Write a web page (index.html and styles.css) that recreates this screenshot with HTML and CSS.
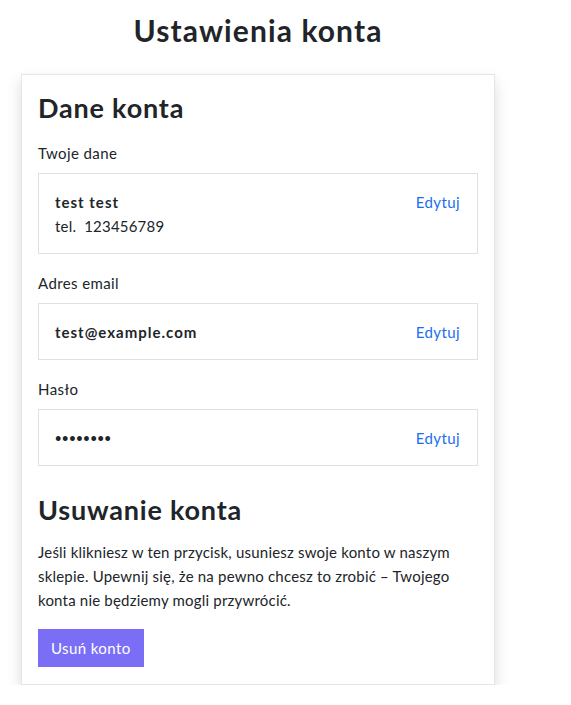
FILE: index.html
```html
<!DOCTYPE html>
<html lang="pl">
<head>
<meta charset="utf-8">
<title>Ustawienia konta</title>
<link rel="stylesheet" href="styles.css">
</head>
<body>
<main class="page">
  <h1 class="page-title">Ustawienia konta</h1>
  <section class="card">
    <h2 class="section-title">Dane konta</h2>

    <div class="field-label first">Twoje dane</div>
    <div class="field-box">
      <div class="field-value">
        <div class="strong">test test</div>
        <div class="sub">tel.&nbsp; 123456789</div>
      </div>
      <a class="edit-link" href="#">Edytuj</a>
    </div>

    <div class="field-label">Adres email</div>
    <div class="field-box">
      <div class="field-value"><div class="strong">test@example.com</div></div>
      <a class="edit-link" href="#">Edytuj</a>
    </div>

    <div class="field-label">Hasło</div>
    <div class="field-box">
      <div class="field-value"><div class="strong dots">••••••••</div></div>
      <a class="edit-link" href="#">Edytuj</a>
    </div>

    <h2 class="section-title delete-title">Usuwanie konta</h2>
    <p class="note">Jeśli klikniesz w ten przycisk, usuniesz swoje konto w naszym sklepie. Upewnij się, że na pewno chcesz to zrobić – Twojego konta nie będziemy mogli przywrócić.</p>
    <button class="danger-btn" type="button">Usuń konto</button>
  </section>
</main>
</body>
</html>
```
FILE: styles.css
```css
* { box-sizing: border-box; }
html, body { margin: 0; padding: 0; background: #fff; }
body {
  font-family: Lato, "Open Sans", "Noto Sans", sans-serif;
  color: #212529;
  font-size: 15px;
}
.page {
  width: 474px;
  margin-left: 21px;
  padding-top: 13px;
}
.page-title {
  margin: 0 0 27px;
  text-align: center;
  font-size: 30px;
  line-height: 34px;
  font-weight: 700;
  letter-spacing: 1.1px;
}
.card {
  border: 1px solid #e3e5e8;
  background: #fff;
  box-shadow: 0 7px 14px rgba(0,0,0,0.14);
  padding: 15px 16px 17px 16px;
}
.section-title {
  margin: 0;
  font-size: 27px;
  line-height: 36px;
  font-weight: 700;
  letter-spacing: 0.8px;
}
.field-label {
  margin-top: 19px;
  margin-bottom: 10px;
  font-size: 15px;
  line-height: 20px;
  font-weight: 400;
  letter-spacing: 0.4px;
}
.field-label.first { margin-top: 17px; }
.field-box {
  border: 1px solid #dee2e6;
  display: flex;
  justify-content: space-between;
  align-items: flex-start;
  padding: 16px 17px 15px 16px;
}
.field-value { display: flex; flex-direction: column; }
.strong { font-weight: 700; font-size: 15px; line-height: 24px; letter-spacing: 1px; }
.sub { font-weight: 400; font-size: 15px; line-height: 24px; letter-spacing: 0.2px; }
.dots { font-size: 11px; letter-spacing: 0.7px; }
.edit-link {
  color: #1a6ff0;
  text-decoration: none;
  font-weight: 400;
  font-size: 15px;
  line-height: 24px;
  letter-spacing: 0.4px;
}
.delete-title { margin-top: 26px; }
.note {
  margin: 12px 0 17px;
  font-size: 15px;
  line-height: 24px;
  font-weight: 400;
  letter-spacing: 0.2px;
}
.danger-btn {
  display: block;
  border: 0;
  background: #7b6ef6;
  color: #fff;
  font-family: inherit;
  font-size: 15px;
  font-weight: 400;
  height: 38px;
  padding: 0 13px;
  letter-spacing: 0.4px;
  border-radius: 0;
}
```
